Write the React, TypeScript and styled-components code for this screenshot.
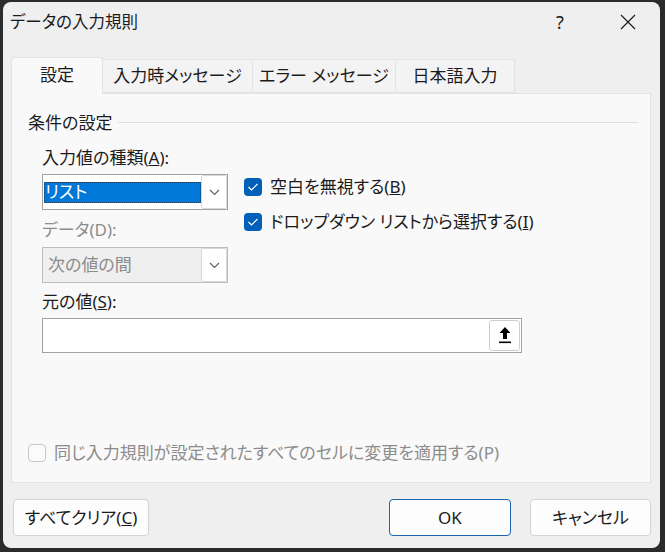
import React from "react";
import styled, { createGlobalStyle } from "styled-components";

const GlobalStyle = createGlobalStyle`
  html, body {
    margin: 0;
    padding: 0;
    background: #2b2b2b;
  }
  body {
    font-family: "Noto Sans", "Noto Sans CJK JP", sans-serif;
    font-feature-settings: "palt";
    color: #1b1b1b;
  }
`;

const Backdrop = styled.div`
  width: 665px;
  height: 552px;
  box-sizing: border-box;
  padding: 2px 5px 4px 3px;
`;

const Dialog = styled.div`
  width: 100%;
  height: 100%;
  background: #efefef;
  border-radius: 8px;
  display: flex;
  flex-direction: column;
  overflow: hidden;
  font-size: 17px;
`;

const TitleBar = styled.div`
  height: 40px;
  display: flex;
  align-items: center;
  padding-left: 7px;
`;

const Title = styled.div`
  flex: 1;
  font-size: 16.5px;
  line-height: 22px;
`;

const TitleActions = styled.div`
  display: flex;
  align-items: center;
  gap: 22px;
  padding-right: 9px;
  height: 100%;
`;

const TitleButton = styled.div`
  width: 46px;
  height: 100%;
  display: flex;
  align-items: center;
  justify-content: center;
  font-size: 18px;
`;

const TabStrip = styled.div`
  margin-top: 15px;
  padding-left: 8px;
  height: 36px;
  display: flex;
  align-items: flex-end;
  position: relative;
  z-index: 1;
`;

const Tab = styled.div<{ $active?: boolean; $width: number }>`
  box-sizing: border-box;
  width: ${(p) => p.$width}px;
  height: ${(p) => (p.$active ? 37 : 34)}px;
  margin-bottom: ${(p) => (p.$active ? -1 : 0)}px;
  background: ${(p) => (p.$active ? "#f9f9f9" : "#f3f3f3")};
  border: 1px solid #e3e3e3;
  border-bottom: ${(p) => (p.$active ? "none" : "1px solid #e3e3e3")};
  border-left: ${(p) => (p.$active ? "1px solid #e3e3e3" : "none")};
  border-radius: ${(p) => (p.$active ? "4px 4px 0 0" : "0")};
  display: flex;
  align-items: center;
  justify-content: center;
  padding-bottom: ${(p) => (p.$active ? 2 : 0)}px;
  white-space: nowrap;
  line-height: 22px;
`;

const Panel = styled.div`
  box-sizing: border-box;
  height: 390px;
  margin: 0 9px 0 8px;
  background: #f9f9f9;
  border: 1px solid #e3e3e3;
  padding: 18px 12px 18px 16px;
  display: flex;
  flex-direction: column;
`;

const GroupHeader = styled.div`
  display: flex;
  align-items: center;
  line-height: 22px;
`;

const GroupRule = styled.div`
  flex: 1;
  height: 1px;
  background: #dedede;
  margin: 0 0 2px 6px;
`;

const GroupBody = styled.div`
  padding-left: 14px;
  padding-top: 13px;
  display: flex;
  flex-direction: column;
`;

const CriteriaRow = styled.div`
  display: flex;
`;

const LeftColumn = styled.div`
  width: 186px;
  display: flex;
  flex-direction: column;
`;

const FieldLabel = styled.div<{ $disabled?: boolean; $gap?: number }>`
  line-height: 22px;
  margin-top: ${(p) => p.$gap ?? 0}px;
  color: ${(p) => (p.$disabled ? "#8c8c8c" : "#1b1b1b")};
  white-space: nowrap;
`;

const Combo = styled.div<{ $disabled?: boolean; $gap: number }>`
  box-sizing: border-box;
  height: 36px;
  margin-top: ${(p) => p.$gap}px;
  border: 1px solid ${(p) => (p.$disabled ? "#bcbcbc" : "#a2a2a2")};
  background: ${(p) => (p.$disabled ? "#efefef" : "#ffffff")};
  display: flex;
  align-items: center;
  padding: 0 0 0 1px;
`;

const ComboValue = styled.div<{ $selected?: boolean; $disabled?: boolean }>`
  flex: 1;
  box-sizing: border-box;
  height: 21px;
  line-height: 19px;
  padding-left: ${(p) => (p.$selected ? 1 : 4)}px;
  background: ${(p) => (p.$selected ? "#0078d7" : "transparent")};
  color: ${(p) => (p.$selected ? "#ffffff" : p.$disabled ? "#8c8c8c" : "#1b1b1b")};
  outline: ${(p) => (p.$selected ? "1px dotted #1d3a5a" : "none")};
  outline-offset: -1px;
  white-space: nowrap;
`;

const DropButton = styled.div`
  box-sizing: border-box;
  width: 26px;
  height: 34px;
  margin: 0;
  background: #ffffff;
  border: 1px solid #d8d8d8;
  border-radius: 2px;
  display: flex;
  align-items: center;
  justify-content: center;
`;

const OptionColumn = styled.div`
  margin-left: 16px;
  padding-top: 29px;
  display: flex;
  flex-direction: column;
  gap: 13px;
`;

const CheckRow = styled.div<{ $disabled?: boolean }>`
  display: flex;
  align-items: center;
  gap: 8px;
  line-height: 22px;
  height: 22px;
  color: ${(p) => (p.$disabled ? "#8c8c8c" : "#1b1b1b")};
  white-space: nowrap;
`;

const CheckBox = styled.div<{ $checked?: boolean }>`
  box-sizing: border-box;
  width: 18px;
  height: 18px;
  border-radius: 4px;
  background: ${(p) => (p.$checked ? "#005fb8" : "#fbfbfb")};
  border: ${(p) => (p.$checked ? "none" : "1px solid #c8c8c8")};
  display: flex;
  align-items: center;
  justify-content: center;
`;

const SourceInput = styled.div`
  box-sizing: border-box;
  width: 480px;
  height: 35px;
  margin-top: 5px;
  border: 1px solid #a2a2a2;
  background: #ffffff;
  display: flex;
  justify-content: flex-end;
  align-items: center;
  padding-right: 1px;
`;

const RefButton = styled.div`
  box-sizing: border-box;
  width: 31px;
  height: 31px;
  border: 1px solid #cfcfcf;
  border-radius: 3px;
  background: #ffffff;
  display: flex;
  align-items: center;
  justify-content: center;
`;

const ApplyRow = styled(CheckRow)`
  margin-top: auto;
`;

const ButtonBar = styled.div`
  margin-top: 16px;
  padding: 0 9px 0 10px;
  display: flex;
  gap: 19px;
`;

const Button = styled.div<{ $width: number; $default?: boolean; $push?: boolean }>`
  box-sizing: border-box;
  width: ${(p) => p.$width}px;
  height: 37px;
  margin-left: ${(p) => (p.$push ? "auto" : "0")};
  background: #fdfdfd;
  border: 1px solid ${(p) => (p.$default ? "#1a66b0" : "#d3d3d3")};
  border-radius: 4px;
  display: flex;
  align-items: center;
  justify-content: center;
  line-height: 22px;
  white-space: nowrap;
`;

const Chevron = () => (
  <svg width="11" height="7" viewBox="0 0 11 7">
    <polyline points="1,1 5.5,5.5 10,1" fill="none" stroke="#5f5f5f" strokeWidth="1.1" />
  </svg>
);

const Check = () => (
  <svg width="12" height="10" viewBox="0 0 12 10">
    <polyline points="1.5,5 4.5,8 10.5,2" fill="none" stroke="#ffffff" strokeWidth="1.2" />
  </svg>
);

const CloseIcon = () => (
  <svg width="16" height="16" viewBox="0 0 16 16">
    <path d="M1 1 L15 15 M15 1 L1 15" stroke="#1b1b1b" strokeWidth="1.2" />
  </svg>
);

const CollapseIcon = () => (
  <svg width="12" height="17" viewBox="0 0 12 17">
    <polygon points="6,0 11.5,6 8,6 8,12 4,12 4,6 0.5,6" fill="#000000" />
    <rect x="0" y="14.5" width="12" height="1.6" fill="#000000" />
  </svg>
);

const tabs = [
  { label: "設定", width: 92, active: true },
  { label: "入力時メッセージ", width: 150 },
  { label: "エラー メッセージ", width: 143 },
  { label: "日本語入力", width: 119 },
];

export default function App() {
  return (
    <>
      <GlobalStyle />
      <Backdrop>
        <Dialog>
          <TitleBar>
            <Title>データの入力規則</Title>
            <TitleActions>
              <TitleButton>?</TitleButton>
              <TitleButton>
                <CloseIcon />
              </TitleButton>
            </TitleActions>
          </TitleBar>

          <TabStrip>
            {tabs.map((t) => (
              <Tab key={t.label} $active={t.active} $width={t.width}>
                {t.label}
              </Tab>
            ))}
          </TabStrip>

          <Panel>
            <GroupHeader>
              <span>条件の設定</span>
              <GroupRule />
            </GroupHeader>
            <GroupBody>
              <CriteriaRow>
                <LeftColumn>
                  <FieldLabel>
                    入力値の種類(<u>A</u>):
                  </FieldLabel>
                  <Combo $gap={5}>
                    <ComboValue $selected>リスト</ComboValue>
                    <DropButton>
                      <Chevron />
                    </DropButton>
                  </Combo>
                  <FieldLabel $disabled $gap={9}>
                    データ(D):
                  </FieldLabel>
                  <Combo $disabled $gap={6}>
                    <ComboValue $disabled>次の値の間</ComboValue>
                    <DropButton>
                      <Chevron />
                    </DropButton>
                  </Combo>
                </LeftColumn>
                <OptionColumn>
                  <CheckRow>
                    <CheckBox $checked>
                      <Check />
                    </CheckBox>
                    <span>
                      空白を無視する(<u>B</u>)
                    </span>
                  </CheckRow>
                  <CheckRow>
                    <CheckBox $checked>
                      <Check />
                    </CheckBox>
                    <span>
                      ドロップダウン リストから選択する(<u>I</u>)
                    </span>
                  </CheckRow>
                </OptionColumn>
              </CriteriaRow>
              <FieldLabel $gap={8}>
                元の値(<u>S</u>):
              </FieldLabel>
              <SourceInput>
                <RefButton>
                  <CollapseIcon />
                </RefButton>
              </SourceInput>
            </GroupBody>

            <ApplyRow $disabled>
              <CheckBox />
              <span>同じ入力規則が設定されたすべてのセルに変更を適用する(P)</span>
            </ApplyRow>
          </Panel>

          <ButtonBar>
            <Button $width={136}>
              すべてクリア(<u>C</u>)
            </Button>
            <Button $width={122} $default $push>
              OK
            </Button>
            <Button $width={121}>キャンセル</Button>
          </ButtonBar>
        </Dialog>
      </Backdrop>
    </>
  );
}
